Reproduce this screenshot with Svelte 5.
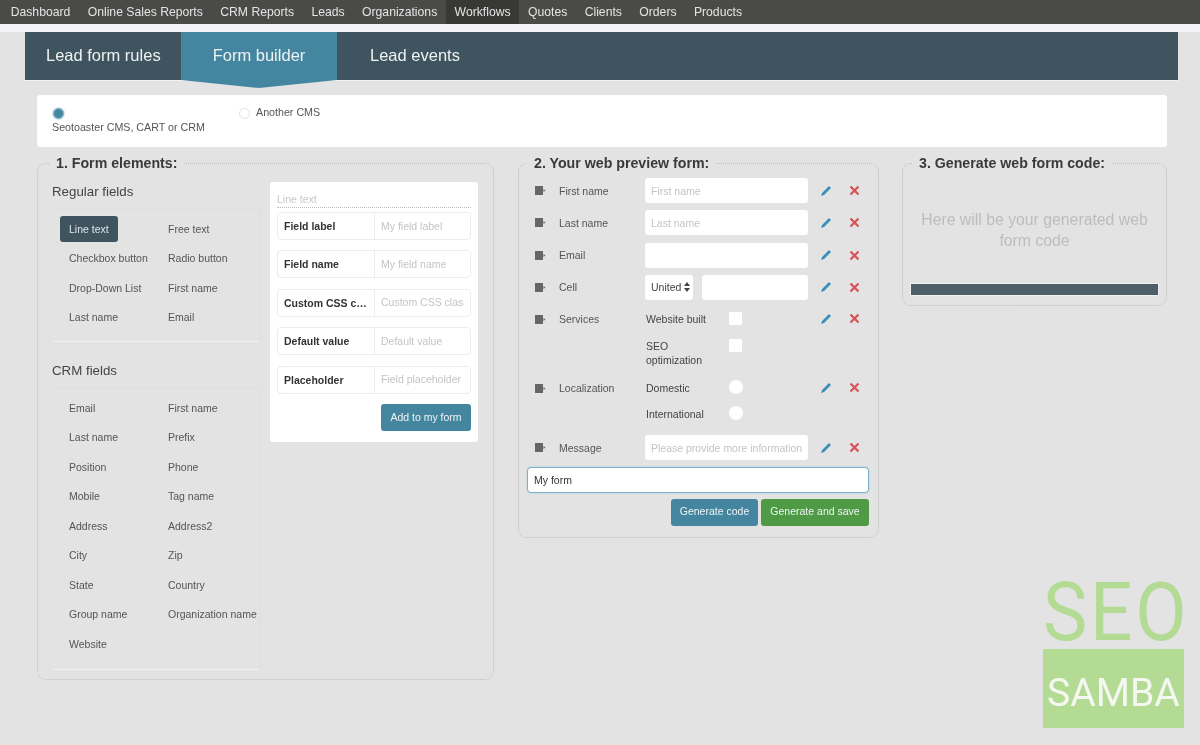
<script>
  const nav = ['Dashboard','Online Sales Reports','CRM Reports','Leads','Organizations','Workflows','Quotes','Clients','Orders','Products'];
  const regular = ['Line text','Free text','Checkbox button','Radio button','Drop-Down List','First name','Last name','Email'];
  const crm = ['Email','First name','Last name','Prefix','Position','Phone','Mobile','Tag name','Address','Address2','City','Zip','State','Country','Group name','Organization name','Website'];
  const props = [['Field label','My field label'],['Field name','My field name'],['Custom CSS class','Custom CSS class'],['Default value','Default value'],['Placeholder','Field placeholder']];
</script>

{#snippet handle()}
  <svg class="handle" width="11" height="9" viewBox="0 0 11 9"><path d="M0 0h8v9H0z" fill="#666"/><path d="M8.5 3l2 1.5-2 1.5z" fill="#666"/></svg>
{/snippet}

{#snippet actions()}
  <span class="act">
    <svg width="12" height="12" viewBox="0 0 12 12"><path d="M9 1l2 2-6.9 6.9-3 1 1-3z" fill="#3d8fb5"/></svg>
  </span>
  <span class="act">
    <svg width="11" height="11" viewBox="0 0 11 11"><path d="M1.5 1.5l8 8M9.5 1.5l-8 8" stroke="#d9535a" stroke-width="2.3"/></svg>
  </span>
{/snippet}

<div class="root">
  <nav class="topnav">
    {#each nav as n}
      <a class:active={n === 'Workflows'} href="#top">{n}</a>
    {/each}
  </nav>

  <div class="strip"></div>

  <div class="tabs">
    <span class="tab first">Lead form rules</span>
    <span class="tab current">Form builder</span>
    <span class="tab third">Lead events</span>
  </div>

  <div class="cms">
    <div class="opt one">
      <span class="radio on"></span>
      <span>Seotoaster CMS, CART or CRM</span>
    </div>
    <div class="opt two">
      <span class="radio"></span>
      <span>Another CMS</span>
    </div>
  </div>

  <div class="cols">
    <fieldset class="col c1">
      <legend>1. Form elements:</legend>
      <div class="c1in">
        <div class="lists">
          <h3>Regular fields</h3>
          <ul class="fields">
            {#each regular as f, i}
              <li class:sel={i === 0}><span>{f}</span></li>
            {/each}
          </ul>
          <h3 class="second">CRM fields</h3>
          <ul class="fields crm">
            {#each crm as f}
              <li><span>{f}</span></li>
            {/each}
          </ul>
        </div>
        <div class="card">
          <div class="cardtitle">Line text</div>
          {#each props as p}
            <div class="prop">
              <span class="plabel">{p[0]}</span>
              <input placeholder={p[1]} />
            </div>
          {/each}
          <div class="addrow"><button class="btn blue add">Add to my form</button></div>
        </div>
      </div>
    </fieldset>

    <fieldset class="col c2">
      <legend>2. Your web preview form:</legend>
      <div class="rows">
        <div class="row">{@render handle()}<label for="f1">First name</label><input id="f1" placeholder="First name" />{@render actions()}</div>
        <div class="row">{@render handle()}<label for="f2">Last name</label><input id="f2" placeholder="Last name" />{@render actions()}</div>
        <div class="row">{@render handle()}<label for="f3">Email</label><input id="f3" />{@render actions()}</div>
        <div class="row">{@render handle()}<label for="f4">Cell</label>
          <div class="cell"><span class="sel-country">United <svg width="6" height="10" viewBox="0 0 6 10"><path d="M3 0l3 4H0zM3 10L0 6h6z" fill="#444"/></svg></span><input id="f4" /></div>
          {@render actions()}
        </div>
        <div class="row top">{@render handle()}<span class="lab">Services</span>
          <div class="options">
            <div class="choice"><span>Website built</span><i class="box"></i></div>
            <div class="choice tall"><span>SEO optimization</span><i class="box up"></i></div>
          </div>
          {@render actions()}
        </div>
        <div class="row top loc">{@render handle()}<span class="lab">Localization</span>
          <div class="options tight">
            <div class="choice"><span>Domestic</span><i class="box round"></i></div>
            <div class="choice"><span>International</span><i class="box round"></i></div>
          </div>
          {@render actions()}
        </div>
        <div class="row msg">{@render handle()}<label for="f7">Message</label><input id="f7" placeholder="Please provide more information" />{@render actions()}</div>
      </div>
      <input class="formname" value="My form" />
      <div class="gen">
        <button class="btn blue gcode">Generate code</button>
        <button class="btn green gsave">Generate and save</button>
      </div>
    </fieldset>

    <fieldset class="col c3">
      <legend>3. Generate web form code:</legend>
      <p class="hint">Here will be your generated web form code</p>
      <div class="bar"></div>
    </fieldset>
  </div>

  <div class="logo" aria-label="SEO Samba">
    <div class="seo">SEO</div>
    <div class="samba"><span>SAMBA</span></div>
  </div>
</div>

<style>
  :global(body) { margin: 0; background: #e3e3e3; }
  .root {
    position: relative;
    width: 1200px;
    height: 745px;
    overflow: hidden;
    background: #e3e3e3;
    font-family: "Liberation Sans", Arial, sans-serif;
    font-size: 10.5px;
    color: #555;
    filter: blur(0.45px);
  }
  .topnav {
    display: flex;
    height: 24px;
    background: #4a4a48;
    padding-left: 2px;
    box-sizing: border-box;
    align-items: stretch;
  }
  .topnav a {
    color: #e4e4e4;
    text-decoration: none;
    font-size: 12.2px;
    line-height: 24px;
    padding: 0 8.7px;
    white-space: nowrap;
  }
  .topnav a.active { background: #383836; }
  .strip { height: 8px; background: #f3f3f6; }

  .tabs {
    display: flex;
    height: 48px;
    margin: 0 22px 0 25px;
    background: #3f545e;
    box-shadow: 0 1px 0 #f3f3f3;
    color: #eef2f3;
    font-size: 16.5px;
    line-height: 47px;
  }
  .tab { display: block; white-space: nowrap; position: relative; }
  .first { width: 156px; padding-left: 21px; box-sizing: border-box; }
  .current { width: 156px; text-align: center; background: #44869f; }
  .current::after {
    content: "";
    position: absolute;
    left: 0; right: 0; top: 100%;
    height: 8px;
    background: #44869f;
    clip-path: polygon(0 0, 100% 0, 50% 100%);
  }
  .third { padding-left: 33px; }

  .cms {
    display: flex;
    width: 1130px;
    height: 52px;
    margin: 15px 0 0 37px;
    background: #fff;
    border-radius: 3px;
    box-sizing: border-box;
    padding: 12px 15px 0;
    color: #555;
    font-size: 10.7px;
  }
  .opt.one { width: 187px; display: flex; flex-direction: column; align-items: flex-start; gap: 2px; }
  .opt.two { display: flex; align-items: flex-start; gap: 6px; line-height: 11px; }
  .radio {
    display: block;
    width: 11px; height: 11px;
    border-radius: 50%;
    border: 1px solid #e2e2e2;
    box-sizing: border-box;
    background: #fff;
    margin-top: 1px;
  }
  .one .radio { margin-left: 1px; }
  .radio.on { background: #4587a3; border-color: #8fbdd0; box-shadow: 0 0 2px #6fa9c2; }

  .cols { display: flex; align-items: flex-start; margin: 8px 0 0 37px; }
  fieldset {
    margin: 0;
    padding: 0;
    min-width: 0;
    box-sizing: border-box;
    border: 1px dotted #bcbcbc;
    border-radius: 9px;
  }
  legend {
    font-size: 14.2px;
    font-weight: 700;
    line-height: 16px;
    color: #3a3a3a;
    padding: 0 7px;
    margin-left: 0;
  }
  .c1 { width: 457px; height: 525px; padding: 0 15px 0 14px; }
  .c2 { width: 361px; height: 383px; margin-left: 24px; padding: 7px 9px 0 8px; }
  .c3 { width: 265px; height: 151px; margin-left: 23px; padding: 0 8px; }
  .c1 legend { margin-left: -3px; }
  .c3 legend { margin-left: 1px; }

  .c1in { display: flex; gap: 9px; align-items: flex-start; padding-top: 3px; }
  .lists { width: 209px; }
  h3 {
    margin: 9px 0 8px;
    font-size: 13.3px;
    font-weight: 400;
    line-height: 18px;
    color: #444;
  }
  h3.second { margin: 20px 0 7px; }
  .fields {
    list-style: none;
    margin: 0;
    padding: 4px 0 9px 8px;
    display: grid;
    grid-template-columns: 99px 102px;
    grid-auto-rows: 29.5px;
    border-top: 1px solid #dedede;
    border-bottom: 1px solid #efefef;
    border-right: 1px solid #dedede;
    border-radius: 3px;
    align-items: center;
    color: #555;
    white-space: nowrap;
  }
  .fields.crm { padding-top: 5px; height: 283px; box-sizing: border-box; }
  .fields li { padding-left: 9px; line-height: 26px; height: 26px; }
  .fields li.sel { padding: 0; }
  .fields li.sel span {
    display: inline-block;
    width: 58px;
    height: 26px;
    box-sizing: border-box;
    padding-left: 9px;
    background: #3f545e;
    border-radius: 3px;
    color: #dfe6e9;
  }

  .card {
    width: 208px;
    height: 260px;
    margin-top: 8px;
    box-sizing: border-box;
    background: #fff;
    border-radius: 3px;
    padding: 11px 7px 0;
  }
  .cardtitle {
    height: 14px;
    line-height: 13px;
    color: #c9c9c9;
    border-bottom: 1px dotted #bbb;
    margin-bottom: 4px;
  }
  .prop {
    display: flex;
    height: 28px;
    margin-bottom: 10.4px;
    box-sizing: border-box;
    border: 1.5px solid #ececec;
    border-radius: 4px;
  }
  .plabel {
    width: 97px;
    flex: none;
    box-sizing: border-box;
    border-right: 1.5px solid #ececec;
    padding-left: 6px;
    font-weight: 700;
    color: #333;
    line-height: 26px;
    white-space: nowrap;
    overflow: hidden;
    text-overflow: ellipsis;
    padding-right: 6px;
  }
  .prop input { flex: 1; min-width: 0; padding: 0 6px; height: 25px; }
  input {
    border: 0;
    outline: 0;
    background: #fff;
    font: inherit;
    color: #444;
    box-sizing: border-box;
    border-radius: 3px;
  }
  input::placeholder { color: #c4c4c4; opacity: 1; }
  .addrow { display: flex; justify-content: flex-end; }
  .btn {
    border: 0;
    border-radius: 3px;
    color: #eef4f6;
    font: inherit;
    height: 27px;
    padding: 0;
  }
  .blue { background: #44869f; }
  .green { background: #4e9a45; }
  .add { width: 90px; }

  .rows { display: flex; flex-direction: column; gap: 7.3px; margin-left: 8px; }
  .row {
    display: grid;
    grid-template-columns: 24px 86px 163px 36px 20px;
    min-height: 25px;
    align-items: center;
  }
  .row.top { align-items: start; }
  .row.top .handle { margin-top: 8px; }
  .row.top .act { margin-top: 6px; }
  .row.loc { margin-top: 2px; }
  .row.msg { margin-top: 1.5px; }
  .row > input { height: 25px; width: 163px; padding: 0 4px 0 6px; }
  .row label, .lab { color: #555; line-height: 22px; }
  .lab { line-height: 24px; }
  .act { display: flex; justify-content: center; }
  .cell { display: flex; gap: 9px; }
  .sel-country {
    display: flex; align-items: center; gap: 3px;
    width: 48px; height: 25px; box-sizing: border-box; padding-left: 6px;
    background: #fff; border-radius: 3px; color: #444;
  }
  .cell input { width: 106px; height: 25px; }
  .options { display: flex; flex-direction: column; gap: 8px; color: #444; }
  .options.tight { gap: 2px; }
  .choice { display: flex; height: 24px; align-items: center; padding-left: 1px; }
  .choice span { width: 83px; }
  .choice.tall { height: 28px; line-height: 14px; align-items: flex-start; }
  .choice.tall span { width: 70px; margin-right: 13px; }
  .box { display: block; width: 13px; height: 13px; background: #fff; border-radius: 1px; margin-top: -2px; }
  .box.up { margin-top: 0; }
  .box.round { width: 14px; height: 14px; border-radius: 50%; }
  .formname {
    display: block;
    width: 342px;
    height: 26px;
    margin-top: 7px;
    border: 1px solid #7fb2cb;
    border-radius: 4px;
    padding: 0 6px;
    color: #333;
    box-shadow: 0 0 2px #9cc4d8;
  }
  .gen { display: flex; justify-content: flex-end; gap: 3px; margin-top: 6px; }
  .gen .btn { padding-bottom: 3px; }
  .gcode { width: 87px; }
  .gsave { width: 108px; }

  .hint {
    margin: 38px 0 0;
    text-align: center;
    font-size: 15.8px;
    line-height: 21px;
    color: #bdbdbd;
  }
  .bar {
    height: 11px;
    margin-top: 33px;
    background: #4f5f69;
    outline: 1px solid #f0f0f0;
  }

  .logo {
    position: absolute;
    left: 1043px;
    top: 570px;
    width: 141px;
    color: #b3db94;
  }
  .seo {
    font-family: Roboto, sans-serif;
    font-weight: 400;
    font-size: 82px;
    height: 79px;
    line-height: 84px;
    letter-spacing: 3px;
    white-space: nowrap;
    transform: scaleX(0.91);
    transform-origin: left center;
  }
  .samba {
    height: 79px;
    box-sizing: border-box;
    padding-top: 8px;
    background: #b3db94;
    color: #f4f8f0;
    display: flex;
    align-items: center;
    font-family: Roboto, sans-serif;
    font-size: 38px;
    font-weight: 400;
    white-space: nowrap;
    overflow: hidden;
  }
  .samba span { display: block; margin-left: 4px; transform: scaleX(1.03); transform-origin: left center; }
</style>
